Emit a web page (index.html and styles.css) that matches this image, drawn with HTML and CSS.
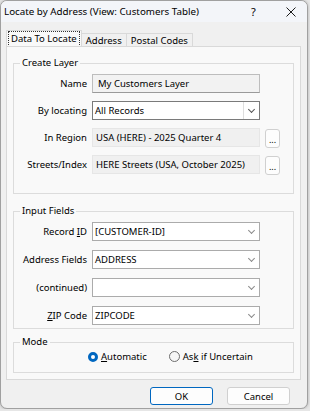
FILE: index.html
```html
<!DOCTYPE html>
<html lang="en">
<head>
    <meta charset="UTF-8">
    <meta name="viewport" content="width=device-width, initial-scale=1.0">
    <title>Locate by Address</title>
    <link rel="stylesheet" href="styles.css">
</head>
<body>
    <div class="window">
        <div class="titlebar">
            <span class="title">Locate by Address (View: Customers Table)</span>
            <span class="help">?</span>
            <span class="close">
                <svg width="10" height="10" viewBox="0 0 10 10"><path d="M0.5 0.5 L9.5 9.5 M9.5 0.5 L0.5 9.5" stroke="#1a1a1a" stroke-width="1"/></svg>
            </span>
        </div>

        <div class="tabs">
            <div class="tab active"><span class="focus">Data To Locate</span></div>
            <div class="tab">Address</div>
            <div class="tab">Postal Codes</div>
        </div>

        <div class="page">
            <fieldset class="group">
                <legend>Create Layer</legend>
                <div class="rows">
                    <label>Name</label>
                    <div class="field edit">My Customers Layer</div>
                    <span></span>

                    <label>By locating</label>
                    <div class="field combo focused">All Records<span class="drop"></span></div>
                    <span></span>

                    <label>In Region</label>
                    <div class="field readonly">USA (HERE) - 2025 Quarter 4</div>
                    <button class="dots">...</button>

                    <label>Streets/Index</label>
                    <div class="field readonly">HERE Streets (USA, October 2025)</div>
                    <button class="dots">...</button>
                </div>
            </fieldset>

            <fieldset class="group inputs">
                <legend>Input Fields</legend>
                <div class="rows input-rows">
                    <label>Record <u>I</u>D</label>
                    <div class="field combo">[CUSTOMER-ID]<span class="drop"></span></div>
                    <span></span>

                    <label>Address Fields</label>
                    <div class="field combo">ADDRESS<span class="drop"></span></div>
                    <span></span>

                    <label>(continued)</label>
                    <div class="field combo"><span class="drop"></span></div>
                    <span></span>

                    <label><u>Z</u>IP Code</label>
                    <div class="field combo">ZIPCODE<span class="drop"></span></div>
                    <span></span>
                </div>
            </fieldset>

            <fieldset class="group mode">
                <legend>Mode</legend>
                <div class="radios">
                    <span class="radio"><span class="dot checked"></span><span><u>A</u>utomatic</span></span>
                    <span class="radio"><span class="dot"></span><span>As<u>k</u> if Uncertain</span></span>
                </div>
            </fieldset>
        </div>

        <div class="actions">
            <button class="btn default">OK</button>
            <button class="btn">Cancel</button>
        </div>
    </div>
</body>
</html>
```

FILE: styles.css
```css
body {
    margin: 0;
    background-color: #e6e6e6;
    font-family: "Noto Sans", sans-serif;
    font-size: 9.5px;
    color: #000;
}
.window {
    width: 306px;
    height: 407px;
    border: 1px solid #a0a0a0;
    border-radius: 7px;
    background-color: #f0f0f0;
    overflow: hidden;
    display: flex;
    flex-direction: column;
    box-shadow: 0 0 3px rgba(0, 0, 0, 0.25);
}
.titlebar {
    height: 21px;
    display: flex;
    align-items: center;
    background-color: #f3f5f9;
    padding-left: 3px;
}
.title {
    flex-grow: 1;
    white-space: nowrap;
    font-size: 9.8px;
}
.help {
    width: 12px;
    margin-right: 23px;
    font-size: 11px;
}
.close {
    width: 10px;
    height: 10px;
    margin-right: 11px;
    display: flex;
}
.tabs {
    display: flex;
    align-items: flex-end;
    padding: 8px 0 0 5px;
    margin-bottom: -1px;
}
.tab {
    height: 13px;
    line-height: 13px;
    padding: 0 4px;
    border: 1px solid #d9d9d9;
    border-bottom: none;
    border-left: none;
    background-color: #f0f0f0;
}
.tab.active {
    height: 16px;
    line-height: 14px;
    padding: 0 1px;
    border-left: 1px solid #d9d9d9;
    background-color: #f9f9f9;
}
.focus {
    display: block;
    padding: 0 2px;
    border: 1px dotted #333;
}
.page {
    margin: 0 6px 0 5px;
    height: 334px;
    box-sizing: border-box;
    border: 1px solid #d9d9d9;
    background-color: #f9f9f9;
    padding: 8px 6px 0 6px;
}
.group {
    margin: 0 0 9px 0;
    padding: 3px 0 19px 0;
    border: 1px solid #dcdcdc;
    min-width: 0;
}
.group legend {
    margin-left: 6px;
    padding: 0 2px;
    line-height: 16px;
}
.rows {
    display: grid;
    grid-template-columns: 73px 168px 15px;
    column-gap: 5px;
    grid-auto-rows: 19px;
    row-gap: 8px;
    align-items: center;
}
.input-rows {
    row-gap: 9px;
}
.inputs {
    padding-bottom: 3px;
    margin-bottom: 5px;
}
.rows label {
    text-align: right;
    white-space: nowrap;
}
.field {
    height: 19px;
    box-sizing: border-box;
    line-height: 17px;
    white-space: nowrap;
    overflow: hidden;
    position: relative;
}
.edit {
    background-color: #f2f2f2;
    border: 1px solid #bdbdbd;
    border-bottom-color: #9a9a9a;
    padding-left: 5px;
}
.readonly {
    background-color: #f0f0f0;
    border: 1px solid #e6e6e6;
    padding-left: 3px;
}
.combo {
    background-color: #fff;
    border: 1px solid #ababab;
    padding-left: 2px;
}
.combo.focused {
    border-color: #7a7a7a;
}
.drop {
    position: absolute;
    right: 0;
    top: 0;
    width: 15px;
    height: 17px;
}
.drop::after {
    content: "";
    position: absolute;
    left: 5px;
    top: 5px;
    width: 4px;
    height: 4px;
    border-right: 1px solid #8a8a8a;
    border-bottom: 1px solid #8a8a8a;
    transform: rotate(45deg);
}
.focused .drop {
    border-left: 1px solid #dedede;
}
.focused .drop::after {
    border-color: #555;
}
.dots {
    width: 15px;
    height: 19px;
    padding: 0;
    margin-top: 2px;
    font-family: inherit;
    font-size: 9px;
    line-height: 19px;
    color: #000;
    background-color: #fdfdfd;
    border: 1px solid #d0d0d0;
    border-radius: 3px;
}
.mode {
    padding: 0 0 9px 0;
    margin: 0;
}
.radios {
    display: flex;
    height: 13px;
    align-items: center;
    padding-left: 74px;
}
.radio {
    display: flex;
    align-items: center;
    margin-right: 22px;
}
.dot {
    width: 9px;
    height: 9px;
    border: 1px solid #6e6e6e;
    border-radius: 50%;
    background-color: #f6f6f6;
    margin-right: 3px;
}
.dot.checked {
    width: 4px;
    height: 4px;
    border: 3.5px solid #0067c0;
    background-color: #fff;
}
.actions {
    display: flex;
    justify-content: flex-end;
    gap: 14px;
    padding: 7px 17px 0 0;
}
.btn {
    width: 63px;
    height: 18px;
    padding: 0;
    font-family: inherit;
    font-size: 9.5px;
    color: #000;
    background-color: #fdfdfd;
    border: 1px solid #d0d0d0;
    border-radius: 3px;
}
.btn.default {
    border-color: #0067c0;
}
```
